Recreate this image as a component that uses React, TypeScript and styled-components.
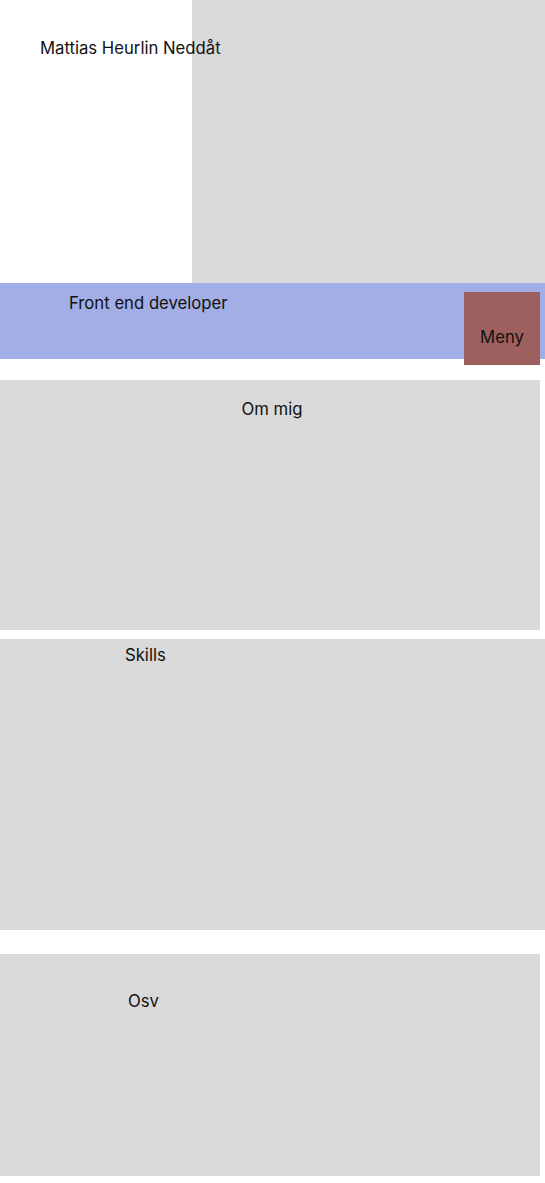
import React from 'react';
import styled, { createGlobalStyle } from 'styled-components';

const GlobalStyle = createGlobalStyle`
  html, body {
    margin: 0;
    padding: 0;
    background: #ffffff;
  }
  body {
    font-family: Inter, "Noto Sans", sans-serif;
    font-size: 16.7px;
    line-height: 20px;
    color: #111111;
  }
`;

const Page = styled.div`
  width: 545px;
  display: flex;
  flex-direction: column;
`;

const Header = styled.header`
  display: flex;
  height: 283px;
`;

const Name = styled.h1`
  width: 192px;
  min-width: 0;
  flex-shrink: 0;
  margin: 0;
  padding: 38px 0 0 40px;
  box-sizing: border-box;
  font-size: 16.7px;
  font-weight: 400;
  line-height: 20px;
  white-space: nowrap;
  position: relative;
  z-index: 1;
`;

const HeroImage = styled.div`
  flex: 1;
  background: #d9d9d9;
`;

const Bar = styled.div`
  display: flex;
  justify-content: space-between;
  align-items: flex-start;
  height: 76px;
  background: #a2aee5;
`;

const Role = styled.div`
  padding: 10px 0 0 69px;
`;

const MenuButton = styled.button`
  width: 76px;
  height: 73px;
  margin: 9px 5px 0 0;
  padding: 35px 0 0;
  border: none;
  background: #9e605e;
  font: inherit;
  color: #111111;
  display: flex;
  justify-content: center;
  align-items: flex-start;
  cursor: pointer;
`;

const Section = styled.section<{
  $width: number;
  $height: number;
  $top: number;
  $padTop: number;
  $padLeft?: number;
  $center?: boolean;
}>`
  width: ${p => p.$width}px;
  height: ${p => p.$height}px;
  margin-top: ${p => p.$top}px;
  padding: ${p => p.$padTop}px 0 0 ${p => p.$padLeft || 0}px;
  box-sizing: border-box;
  background: #d9d9d9;
  text-align: ${p => (p.$center ? 'center' : 'left')};
`;

const App = () => {
  return (
    <>
      <GlobalStyle />
      <Page>
        <Header>
          <Name>Mattias Heurlin Neddåt</Name>
          <HeroImage />
        </Header>
        <Bar>
          <Role>Front end developer</Role>
          <MenuButton>Meny</MenuButton>
        </Bar>
        <Section $width={540} $height={250} $top={21} $padTop={19} $padLeft={4} $center>
          Om mig
        </Section>
        <Section $width={545} $height={291} $top={9} $padTop={6} $padLeft={125}>
          Skills
        </Section>
        <Section $width={540} $height={222} $top={24} $padTop={37} $padLeft={128}>
          Osv
        </Section>
      </Page>
    </>
  );
};

export default App;
